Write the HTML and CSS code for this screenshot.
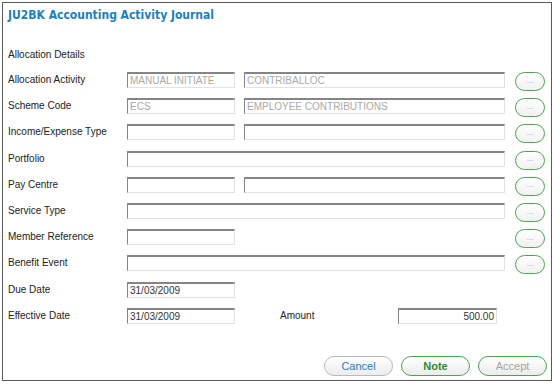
FILE: index.html
```html
<!DOCTYPE html>
<html lang="en">
<head>
    <meta charset="UTF-8">
    <meta name="viewport" content="width=device-width, initial-scale=1.0">
    <title>JU2BK Accounting Activity Journal</title>
    <link rel="stylesheet" href="styles.css">
</head>
<body>
    <div class="panel">
        <h1 class="title">JU2BK Accounting Activity Journal</h1>
        <div class="section">Allocation Details</div>

        <div class="form">
            <div class="row">
                <span class="label">Allocation Activity</span>
                <div class="fields">
                    <input class="field short" value="MANUAL INITIATE" disabled>
                    <input class="field long" value="CONTRIBALLOC" disabled>
                </div>
                <button class="lookup">...</button>
            </div>
            <div class="row">
                <span class="label">Scheme Code</span>
                <div class="fields">
                    <input class="field short" value="ECS" disabled>
                    <input class="field long" value="EMPLOYEE CONTRIBUTIONS" disabled>
                </div>
                <button class="lookup">...</button>
            </div>
            <div class="row">
                <span class="label">Income/Expense Type</span>
                <div class="fields">
                    <input class="field short">
                    <input class="field long">
                </div>
                <button class="lookup">...</button>
            </div>
            <div class="row">
                <span class="label">Portfolio</span>
                <div class="fields">
                    <input class="field long">
                </div>
                <button class="lookup">...</button>
            </div>
            <div class="row">
                <span class="label">Pay Centre</span>
                <div class="fields">
                    <input class="field short">
                    <input class="field long">
                </div>
                <button class="lookup">...</button>
            </div>
            <div class="row">
                <span class="label">Service Type</span>
                <div class="fields">
                    <input class="field long">
                </div>
                <button class="lookup">...</button>
            </div>
            <div class="row">
                <span class="label">Member Reference</span>
                <div class="fields">
                    <input class="field short">
                </div>
                <button class="lookup">...</button>
            </div>
            <div class="row">
                <span class="label">Benefit Event</span>
                <div class="fields">
                    <input class="field long">
                </div>
                <button class="lookup">...</button>
            </div>
            <div class="row">
                <span class="label">Due Date</span>
                <div class="fields">
                    <input class="field short" value="31/03/2009">
                </div>
            </div>
            <div class="row">
                <span class="label">Effective Date</span>
                <div class="fields">
                    <input class="field short" value="31/03/2009">
                    <span class="label amount-label">Amount</span>
                    <input class="field amount" value="500.00">
                </div>
            </div>
        </div>

        <div class="actions">
            <button class="action cancel">Cancel</button>
            <button class="action note">Note</button>
            <button class="action accept">Accept</button>
        </div>
    </div>
</body>
</html>
```

FILE: styles.css
```css
body {
    margin: 0;
    padding: 2px 0 0 2px;
    font-family: "Liberation Sans", Arial, sans-serif;
    font-size: 10px;
    color: #222;
    background: #fff;
}

.panel {
    box-sizing: border-box;
    width: 550px;
    height: 379px;
    border: 1px solid #5a5a5a;
    padding: 4px 5px 0 5px;
    display: flex;
    flex-direction: column;
}

.title {
    margin: 0;
    font-family: "DejaVu Sans Condensed", "DejaVu Sans", sans-serif;
    font-size: 12px;
    font-weight: bold;
    line-height: 16px;
    color: #1d7fc1;
}

.section {
    margin-top: 24px;
    line-height: 16px;
}

.form {
    margin-top: 4px;
}

.row {
    display: grid;
    grid-template-columns: 109px 378px 30px;
    column-gap: 10px;
    align-items: center;
    height: 26.2px;
}

.label {
    line-height: 16px;
}

.fields {
    display: flex;
    align-items: center;
    gap: 9px;
}

.field {
    box-sizing: border-box;
    height: 16px;
    margin: 0;
    padding: 0 2px;
    border-top: 2px solid #858585;
    border-left: 1px solid #858585;
    border-right: 1px solid #e2e2e2;
    border-bottom: 1px solid #e2e2e2;
    background: #fff;
    font-family: "Liberation Sans", Arial, sans-serif;
    font-size: 10px;
    color: #333;
    outline: none;
}

.field:disabled {
    color: #a9a9a9;
    background: #fff;
}

.short {
    width: 108px;
}

.long {
    flex: 1;
    min-width: 0;
}

.amount-label {
    margin-left: 36px;
    width: 109px;
}

.amount {
    width: 99px;
    text-align: right;
}

.lookup {
    box-sizing: border-box;
    width: 30px;
    height: 19px;
    margin-top: 3px;
    padding: 0 0 2px;
    border: 1px solid #4ea44e;
    border-radius: 10px;
    background: linear-gradient(#ffffff, #f1f1f1);
    color: #9a9a9a;
    font-size: 8px;
    line-height: 14px;
}

.actions {
    display: flex;
    justify-content: flex-end;
    gap: 8px;
    margin-top: 27px;
    margin-right: -1px;
}

.action {
    box-sizing: border-box;
    width: 69px;
    height: 20px;
    border: 1px solid #4ea44e;
    border-radius: 10px;
    background: linear-gradient(#ffffff, #ececec);
    font-family: "Liberation Sans", Arial, sans-serif;
    font-size: 11px;
    padding: 0;
}

.cancel {
    border-color: #b9b9b9;
    color: #2c7cbf;
}

.note {
    color: #2e8a2e;
    font-weight: bold;
}

.accept {
    color: #a3a3a3;
}
```
